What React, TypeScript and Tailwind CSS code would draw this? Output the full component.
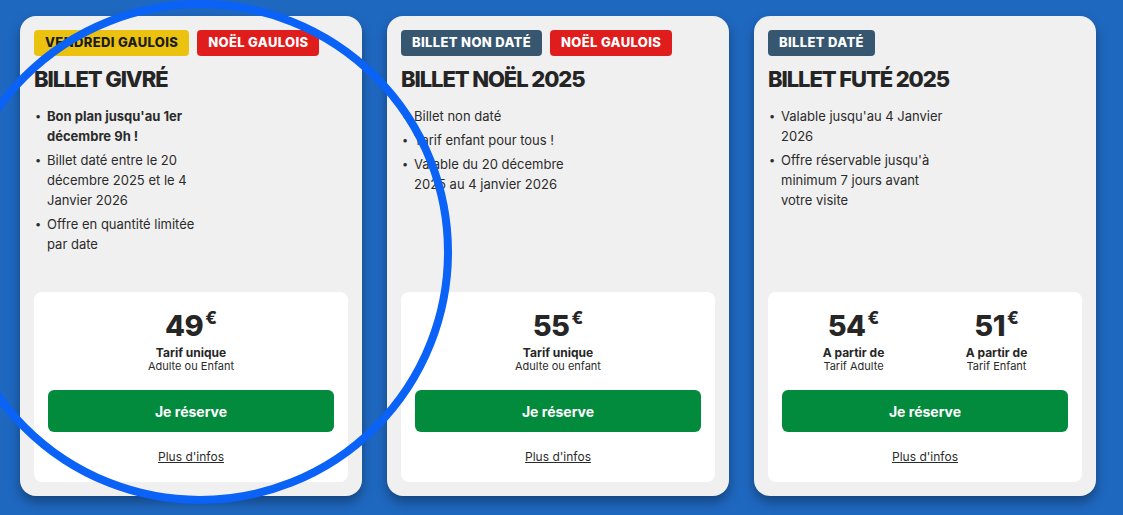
import type { ReactNode } from "react";

type Badge = { label: string; tone: "yellow" | "red" | "slate" };
type Price = { amount: string; title: string; sub: string };

type Offer = {
  badges: Badge[];
  title: string;
  bullets: { lines: string[]; bold?: boolean }[];
  prices: Price[];
};

const offers: Offer[] = [
  {
    badges: [
      { label: "Vendredi gaulois", tone: "yellow" },
      { label: "Noël gaulois", tone: "red" },
    ],
    title: "BILLET GIVRÉ",
    bullets: [
      { lines: ["Bon plan jusqu'au 1er", "décembre 9h !"], bold: true },
      { lines: ["Billet daté entre le 20", "décembre 2025 et le 4", "Janvier 2026"] },
      { lines: ["Offre en quantité limitée", "par date"] },
    ],
    prices: [{ amount: "49", title: "Tarif unique", sub: "Adulte ou Enfant" }],
  },
  {
    badges: [
      { label: "Billet non daté", tone: "slate" },
      { label: "Noël gaulois", tone: "red" },
    ],
    title: "BILLET NOËL 2025",
    bullets: [
      { lines: ["Billet non daté"] },
      { lines: ["Tarif enfant pour tous !"] },
      { lines: ["Valable du 20 décembre", "2025 au 4 janvier 2026"] },
    ],
    prices: [{ amount: "55", title: "Tarif unique", sub: "Adulte ou enfant" }],
  },
  {
    badges: [{ label: "Billet daté", tone: "slate" }],
    title: "BILLET FUTÉ 2025",
    bullets: [
      { lines: ["Valable jusqu'au 4 Janvier", "2026"] },
      { lines: ["Offre réservable jusqu'à", "minimum 7 jours avant", "votre visite"] },
    ],
    prices: [
      { amount: "54", title: "A partir de", sub: "Tarif Adulte" },
      { amount: "51", title: "A partir de", sub: "Tarif Enfant" },
    ],
  },
];

const toneClass = {
  yellow: "bg-[#ebc210] text-[#1c1c1c]",
  red: "bg-[#e01d1d] text-white",
  slate: "bg-[#37566f] text-white",
};

function Tag({ badge }: { badge: Badge }) {
  return (
    <span
      className={`flex h-[26px] items-center rounded-[4px] px-[11px] text-[13px] font-extrabold uppercase tracking-[0.35px] ${toneClass[badge.tone]}`}
    >
      {badge.label}
    </span>
  );
}

function PriceBlock({ price }: { price: Price }) {
  return (
    <div className="flex flex-col items-center">
      <div className="flex items-start text-[#262626]">
        <span className="text-[29px] font-extrabold leading-[34px] tracking-[-0.5px]">{price.amount}</span>
        <span className="ml-[2px] mt-[1px] text-[17px] font-extrabold leading-none">€</span>
      </div>
      <span className="mt-[3px] text-[12px] font-bold leading-[14px] text-[#262626]">{price.title}</span>
      <span className="text-[11px] leading-[13px] text-[#2b2b2b]">{price.sub}</span>
    </div>
  );
}

function Card({ offer }: { offer: Offer }) {
  return (
    <div className="flex h-[480px] w-[342px] flex-col rounded-[16px] bg-[#f0f0f0] p-[14px] shadow-[0_6px_12px_rgba(0,0,0,0.35)]">
      <div className="flex gap-[8px]">
        {offer.badges.map((b) => (
          <Tag key={b.label} badge={b} />
        ))}
      </div>
      <h2 className="mt-[8px] text-[22px] font-extrabold leading-[30px] tracking-[-1.1px] text-[#252525]">
        {offer.title}
      </h2>
      <ul className="mt-[12px] flex flex-col gap-[4px]">
        {offer.bullets.map((item, i) => (
          <li
            key={i}
            className={`flex text-[13px] leading-[20px] text-[#2b2b2b] ${item.bold ? "font-bold" : ""}`}
          >
            <span className="w-[13px] shrink-0 pl-[1px] text-[11px] font-normal">•</span>
            <span>
              {item.lines.map((line, j): ReactNode => (
                <span key={j} className="block whitespace-nowrap">
                  {line}
                </span>
              ))}
            </span>
          </li>
        ))}
      </ul>
      <div className="mt-auto flex h-[190px] flex-col rounded-[8px] bg-white px-[14px] pt-[17px]">
        <div className="flex justify-around">
          {offer.prices.map((p) => (
            <PriceBlock key={p.amount} price={p} />
          ))}
        </div>
        <button className="mt-[17px] h-[42px] w-full rounded-[6px] bg-[#028a3d] text-[14px] font-bold text-white">
          Je réserve
        </button>
        <a className="mt-[17px] self-center text-[12px] leading-[16px] text-[#2b2b2b] underline">Plus d'infos</a>
      </div>
    </div>
  );
}

export default function App() {
  return (
    <div
      className="relative h-[515px] w-[1123px] overflow-hidden bg-[#1f68c0] px-[20px] pt-[16px]"
      style={{ fontFamily: "Inter, 'Open Sans', sans-serif" }}
    >
      <div className="flex gap-[25px]">
        {offers.map((o) => (
          <Card key={o.title} offer={o} />
        ))}
      </div>
      {/* highlight ring drawn over the first offer */}
      <div className="pointer-events-none absolute left-[-52px] top-0 z-10 h-[504px] w-[504px] rounded-full border-[8px] border-[#0a62f6]" />
    </div>
  );
}
